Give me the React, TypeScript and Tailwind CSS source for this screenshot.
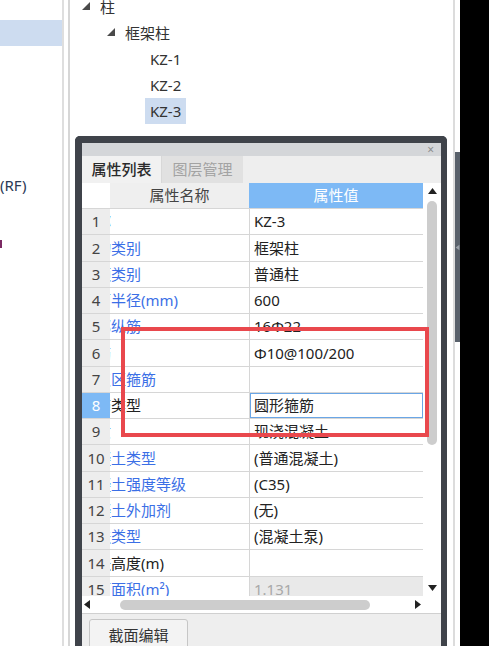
import React from 'react';

type Row = {
  n: number;
  name: string;
  value: string;
  blue: boolean;
  active?: boolean;
  readonly?: boolean;
};

const rows: Row[] = [
  { n: 1, name: '名称', value: 'KZ-3', blue: true },
  { n: 2, name: '结构类别', value: '框架柱', blue: true },
  { n: 3, name: '定额类别', value: '普通柱', blue: true },
  { n: 4, name: '截面半径(mm)', value: '600', blue: true },
  { n: 5, name: '全部纵筋', value: '16Φ22', blue: true },
  { n: 6, name: '箍筋', value: 'Φ10@100/200', blue: true },
  { n: 7, name: '节点区箍筋', value: '', blue: true },
  { n: 8, name: '箍筋类型', value: '圆形箍筋', blue: false, active: true },
  { n: 9, name: '材质', value: '现浇混凝土', blue: true },
  { n: 10, name: '混凝土类型', value: '(普通混凝土)', blue: true },
  { n: 11, name: '混凝土强度等级', value: '(C35)', blue: true },
  { n: 12, name: '混凝土外加剂', value: '(无)', blue: true },
  { n: 13, name: '泵送类型', value: '(混凝土泵)', blue: true },
  { n: 14, name: '泵送高度(m)', value: '', blue: false },
  { n: 15, name: '截面面积(m²)', value: '1.131', blue: true, readonly: true },
];

// small filled triangles for tree toggles and scroll arrows
const Tri: React.FC<{ dir: 'up' | 'down' | 'left' | 'right' | 'corner'; className?: string }> = ({ dir, className }) => {
  const pts = {
    up: '0,7 4.5,1 9,7',
    down: '0,1 9,1 4.5,7',
    left: '7,0 7,9 1,4.5',
    right: '1,0 1,9 7,4.5',
    corner: '8,0 8,8 0,8',
  }[dir];
  const size = dir === 'left' || dir === 'right' ? 'w-[8px] h-[9px]' : dir === 'corner' ? 'w-[8px] h-[8px]' : 'w-[9px] h-[8px]';
  return (
    <svg viewBox={dir === 'left' || dir === 'right' ? '0 0 8 9' : dir === 'corner' ? '0 0 8 8' : '0 0 9 8'} className={`${size} ${className ?? ''}`}>
      <polygon points={pts} fill="currentColor" />
    </svg>
  );
};

const TreeItem: React.FC<{ pad: string; label: string; toggle?: boolean; selected?: boolean }> = ({ pad, label, toggle, selected }) => (
  <div className={`h-[26px] flex items-center ${pad}`}>
    {toggle && <Tri dir="corner" className="text-[#4a4a4a] mr-[10px] -mt-[2px]" />}
    <span className={`leading-[26px] ${selected ? 'bg-[#cddcf0] px-[5px]' : toggle ? '' : 'px-[5px]'}`}>{label}</span>
  </div>
);

export default function App() {
  return (
    <div className="relative w-[489px] h-[646px] overflow-hidden bg-white flex font-['Noto_Sans','Noto_Sans_CJK_SC',sans-serif] text-[15px] text-[#333]">
      {/* left pane (cut off) */}
      <div className="w-[62px] shrink-0 flex flex-col">
        <div className="h-[26px] mt-[20px] bg-[#cddcf0]" />
        <div className="mt-[129px] leading-[20px] text-[#2b3a55] whitespace-nowrap">(RF)</div>
        <div className="mt-[45px] w-[2px] h-[8px] bg-[#7b2a63]" />
      </div>
      <div className="w-[2px] shrink-0 bg-[#dedede]" />
      <div className="w-[4px] shrink-0" />
      <div className="w-[2px] shrink-0 bg-[#d6d6d6]" />

      {/* middle: tree + property panel */}
      <div className="w-[383px] shrink-0 flex flex-col">
        <div className="-mt-[6px]">
          <TreeItem pad="pl-[12px]" label="柱" toggle />
          <TreeItem pad="pl-[37px]" label="框架柱" toggle />
          <TreeItem pad="pl-[75px]" label="KZ-1" />
          <TreeItem pad="pl-[75px]" label="KZ-2" />
          <TreeItem pad="pl-[75px]" label="KZ-3" selected />
        </div>

        <div className="mt-[12px] ml-[5px] w-[372px] h-[520px] shrink-0 flex flex-col border-[#3f434a] border-l-[7px] border-r-[6px] border-t-[7px] rounded-t-[5px] bg-[#eeeeee]">
          {/* title bar */}
          <div className="h-[13px] bg-[#d4d6d9] flex items-center justify-end pr-[7px]">
            <span className="text-[12px] leading-[12px] text-[#8d8d8d]">×</span>
          </div>
          {/* tabs */}
          <div className="h-[27px] flex bg-[#eeeeee]">
            <div className="w-[80px] flex items-center justify-center bg-[#f1f1f1] border-r border-[#d8d8d8] text-[#2a2a2a] font-medium">属性列表</div>
            <div className="w-[81px] flex items-center justify-center bg-[#e1e1e1] text-[#a3a3a3]">图层管理</div>
          </div>

          {/* grid */}
          <div className="h-[413px] flex bg-white">
            <div className="w-[341px] flex flex-col overflow-hidden">
              <div className="h-[26px] shrink-0 flex border-b border-[#d6d6d6]">
                <div className="w-[28px] bg-white" />
                <div className="w-[139px] bg-[#efefef] flex items-center justify-center text-[#444]">属性名称</div>
                <div className="w-[174px] bg-[#7db9f5] flex items-center justify-center text-white">属性值</div>
              </div>
              {rows.map((r) => (
                <div key={r.n} className="h-[26.25px] shrink-0 flex border-b border-[#d6d6d6]">
                  <div className={`w-[28px] flex items-center justify-center ${r.active ? 'bg-[#7db9f5] text-white' : 'bg-[#ededed] text-[#444]'}`}>
                    {r.n}
                  </div>
                  <div className={`w-[139px] overflow-hidden flex items-center whitespace-nowrap ${r.blue ? 'text-[#3b6fe6]' : 'text-[#222]'}`}>
                    <span className="ml-[-29px]">{r.name}</span>
                  </div>
                  <div className={`w-[174px] border-l border-[#d6d6d6] flex items-center whitespace-nowrap ${r.readonly ? 'bg-[#e9e9e9] text-[#a8a8a8]' : 'text-[#222]'}`}>
                    {r.active ? (
                      <div className="w-full h-full border-[1.5px] border-[#6aa6e6] flex items-center pl-[3px]">{r.value}</div>
                    ) : (
                      <span className="pl-[4px]">{r.value}</span>
                    )}
                  </div>
                </div>
              ))}
            </div>
            {/* vertical scrollbar */}
            <div className="w-[18px] flex flex-col items-center pt-[4px] pb-[4px]">
              <Tri dir="up" className="text-[#222]" />
              <div className="mt-[6px] w-[10px] h-[244px] rounded-full bg-[#cdcdcd]" />
              <div className="flex-1" />
              <Tri dir="down" className="text-[#222]" />
            </div>
          </div>

          {/* horizontal scrollbar */}
          <div className="h-[17px] bg-white flex items-center">
            <Tri dir="left" className="ml-[1px] text-[#222]" />
            <div className="ml-[29px] w-[250px] h-[10px] rounded-full bg-[#cdcdcd]" />
            <Tri dir="right" className="ml-[44px] text-[#222]" />
          </div>

          {/* footer */}
          <div className="flex-1 border-t border-[#d0d0d0] bg-[#eeeeee] pt-[5px] pl-[7px]">
            <div className="w-[99px] h-[32px] rounded-[3px] border border-[#c6c6c6] bg-[#f3f3f3] flex items-center justify-center text-[#333]">
              截面编辑
            </div>
          </div>
        </div>
      </div>

      {/* right edge */}
      <div className="w-[2px] shrink-0 bg-[#dcdcdc]" />
      <div className="w-[5px] shrink-0 flex flex-col">
        <div className="mt-[152px] h-[190px] bg-[#5a626c] flex items-center justify-center">
          <Tri dir="left" className="w-[4px] h-[6px] text-[#9aa1a9]" />
        </div>
      </div>
      <div className="flex-1 bg-black" />

      {/* red annotation box */}
      <div className="absolute left-[121px] top-[327px] w-[308px] h-[110px] border-4 border-[#e9484d]" />
    </div>
  );
}
